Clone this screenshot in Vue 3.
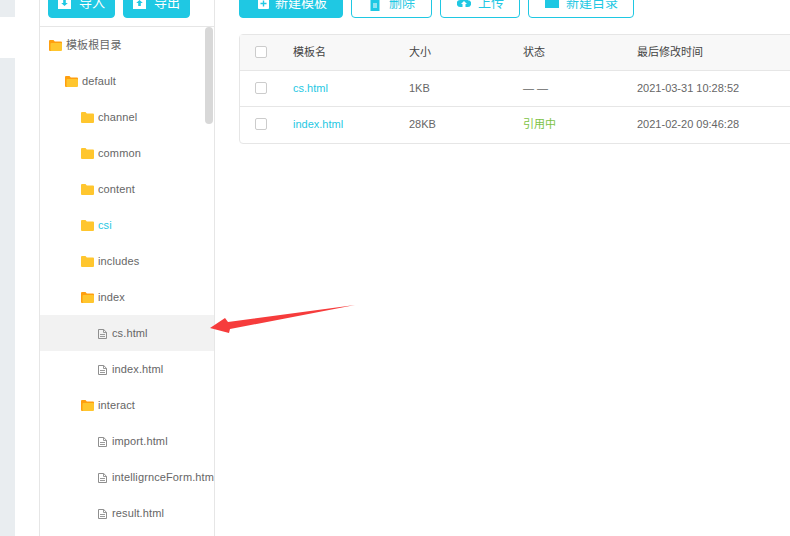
<script setup>
const tree = [
  { name: '模板根目录', level: 0, type: 'open' },
  { name: 'default', level: 1, type: 'open' },
  { name: 'channel', level: 2, type: 'closed' },
  { name: 'common', level: 2, type: 'closed' },
  { name: 'content', level: 2, type: 'closed' },
  { name: 'csi', level: 2, type: 'closed', active: true },
  { name: 'includes', level: 2, type: 'closed' },
  { name: 'index', level: 2, type: 'open' },
  { name: 'cs.html', level: 3, type: 'file', hover: true },
  { name: 'index.html', level: 3, type: 'file' },
  { name: 'interact', level: 2, type: 'open' },
  { name: 'import.html', level: 3, type: 'file' },
  { name: 'intelligrnceForm.html', level: 3, type: 'file' },
  { name: 'result.html', level: 3, type: 'file' }
]
const files = [
  { name: 'cs.html', size: '1KB', status: '— —', used: false, time: '2021-03-31 10:28:52' },
  { name: 'index.html', size: '28KB', status: '引用中', used: true, time: '2021-02-20 09:46:28' }
]
</script>

<template>
  <div class="page">
    <aside class="gutter">
      <div class="block top"></div>
      <div class="block rest"></div>
    </aside>

    <section class="panel">
      <div class="panel-tools">
        <button class="btn solid small">
          <svg class="ico" viewBox="0 0 13 13"><path fill="#fff" d="M0 1.500A1 1 0 0 1 1 .5h11a1 1 0 0 1 1 1V13H0z"/><path fill="#1fc8e3" d="M5.200 4h2.600v3h2L6.500 10 3.200 7h2z"/></svg>
          <span>导入</span>
        </button>
        <button class="btn solid small">
          <svg class="ico" viewBox="0 0 13 13"><path fill="#fff" d="M0 1.500A1 1 0 0 1 1 .5h11a1 1 0 0 1 1 1V13H0z"/><path fill="#1fc8e3" d="M5.200 10h2.600V7h2L6.500 4 3.200 7h2z"/></svg>
          <span>导出</span>
        </button>
      </div>
      <div class="tree">
        <div class="scroll-thumb"></div>
        <div
          v-for="item in tree"
          :key="item.name"
          class="node"
          :class="['lv' + item.level, { active: item.active, hover: item.hover }]"
        >
          <svg v-if="item.type === 'open'" class="folder" viewBox="0 0 13 11">
            <path fill="#ff9f0f" d="M0 1a1 1 0 0 1 1-1h3.500l1.300 1.500H12a1 1 0 0 1 1 1V4H3v7H1a1 1 0 0 1-1-1z"/>
            <path fill="#ffc62e" d="M1.500 4a1 1 0 0 1 1-1H12a1 1 0 0 1 1 1v6a1 1 0 0 1-1 1H2.500a1 1 0 0 1-1-1z"/>
          </svg>
          <svg v-else-if="item.type === 'closed'" class="folder" viewBox="0 0 13 11">
            <path fill="#ffc62e" d="M0 1a1 1 0 0 1 1-1h3.500l1.300 1.500H12a1 1 0 0 1 1 1V10a1 1 0 0 1-1 1H1a1 1 0 0 1-1-1z"/>
          </svg>
          <svg v-else class="file" viewBox="0 0 9 10">
            <path fill="none" stroke="#8f8f8f" d="M.5.500h5.200l2.800 2.800v6.200H.5z"/>
            <path fill="none" stroke="#8f8f8f" stroke-width=".9" d="M5.500.500v3h3M2 5.500h5M2 7.500h5"/>
          </svg>
          <span class="label">{{ item.name }}</span>
        </div>
      </div>
    </section>

    <main class="main">
      <div class="tools">
        <button class="btn solid wide">
          <svg class="ico" viewBox="0 0 13 13"><path fill="#fff" d="M3 0h7l3 3v9a1 1 0 0 1-1 1H3a1 1 0 0 1-1-1V1a1 1 0 0 1 1-1z"/><path fill="#1fc8e3" d="M6.800 4.500h1.400v2.300h2.300v1.400H8.200v2.300H6.800V8.200H4.500V6.800h2.300z"/></svg>
          <span>新建模板</span>
        </button>
        <button class="btn line del">
          <svg class="ico" viewBox="0 0 14 14"><path fill="#1fc8e3" d="M2 0h10v2H2zM2.500 3h9v11h-9z"/><path fill="#fff" d="M5.500 6h1v5h-1zM7.500 6h1v5h-1z"/></svg>
          <span>删除</span>
        </button>
        <button class="btn line">
          <svg class="ico" viewBox="0 0 14 14"><path fill="#1fc8e3" d="M3.500 12A3.500 3.500 0 0 1 3 5 4.200 4.200 0 0 1 11 5.200 3.400 3.400 0 0 1 10.500 12H8.500V9H10L7 6 4 9h1.500v3z"/></svg>
          <span>上传</span>
        </button>
        <button class="btn line">
          <svg class="ico" viewBox="0 0 14 14"><path fill="#1fc8e3" d="M0 1h5l1.500 1.500H14V13H0z"/></svg>
          <span>新建目录</span>
        </button>
      </div>

      <div class="table">
        <div class="row head">
          <span class="check"></span>
          <span>模板名</span>
          <span>大小</span>
          <span>状态</span>
          <span>最后修改时间</span>
        </div>
        <div v-for="file in files" :key="file.name" class="row">
          <span class="check"></span>
          <span class="link">{{ file.name }}</span>
          <span>{{ file.size }}</span>
          <span :class="{ used: file.used }">{{ file.status }}</span>
          <span>{{ file.time }}</span>
        </div>
      </div>
    </main>

    <svg class="arrow" viewBox="0 0 150 32" width="150" height="32">
      <path fill="#f63c3c" d="M146 1 19 18 16 14 1 24 20 29 21 25z"/>
    </svg>
  </div>
</template>

<style>
html, body {
  margin: 0;
  background: #fff;
}
</style>

<style scoped>
.page {
  position: relative;
  display: flex;
  width: 790px;
  height: 536px;
  overflow: hidden;
  font-family: "Liberation Sans", "Noto Sans CJK SC", sans-serif;
  font-size: 11px;
  line-height: 16px;
  color: #666;
  background: #fff;
}
.gutter {
  flex: none;
  width: 15px;
  margin-right: 24px;
  display: flex;
  flex-direction: column;
  gap: 41px;
}
.block {
  background: #e9edf0;
}
.block.top {
  height: 17px;
}
.block.rest {
  flex: 1;
}
.panel {
  flex: none;
  width: 174px;
  margin-top: -14px;
  height: 550px;
  border-left: 1px solid #e6e6e6;
  border-right: 1px solid #e6e6e6;
  display: flex;
  flex-direction: column;
}
.panel-tools {
  flex: none;
  display: flex;
  gap: 8px;
  padding: 0 8px 8px;
  border-bottom: 1px solid #e6e6e6;
}
.tree {
  position: relative;
  flex: 1;
  overflow: hidden;
}
.scroll-thumb {
  position: absolute;
  top: 0;
  right: 1px;
  width: 8px;
  height: 97px;
  border-radius: 4px;
  background: #d8d8d8;
}
.node {
  display: flex;
  align-items: center;
  height: 36px;
  white-space: nowrap;
  overflow: hidden;
}
.node.hover {
  background: #f2f2f2;
}
.node.active {
  color: #1fc8e3;
}
.lv0 { padding-left: 9px; }
.lv1 { padding-left: 25px; }
.lv2 { padding-left: 41px; }
.lv3 { padding-left: 58px; }
.label {
  letter-spacing: 0.12px;
}
.folder {
  flex: none;
  width: 13px;
  height: 11px;
  margin-right: 4px;
}
.file {
  flex: none;
  width: 9px;
  height: 10px;
  margin-right: 5px;
  margin-top: 1px;
}
.main {
  flex: none;
  width: 575px;
  margin-left: 24px;
  margin-top: -14px;
}
.tools {
  display: flex;
  gap: 8px;
}
.btn {
  display: inline-flex;
  align-items: center;
  flex: none;
  height: 32px;
  box-sizing: border-box;
  padding: 0 15px 0 16px;
  gap: 7px;
  border: 1px solid #1fc8e3;
  border-radius: 4px;
  font-family: inherit;
  font-size: 13px;
  white-space: nowrap;
  background: #fff;
  color: #1fc8e3;
}
.btn span {
  margin-bottom: 2px;
}
.btn.solid {
  background: #1fc8e3;
  color: #fff;
}
.btn.small {
  width: 67px;
  padding: 0 9px;
  gap: 8px;
}
.btn.wide {
  gap: 6px;
  width: 104px;
}
.btn.del {
  width: 81px;
}
.ico {
  flex: none;
  width: 14px;
  height: 14px;
}
.del .ico {
  margin-top: 4px;
}
.solid .ico {
  width: 13px;
  height: 13px;
}
.table {
  margin-top: 16px;
  width: 575px;
  border: 1px solid #e6e6e6;
  border-radius: 4px;
}
.row {
  display: grid;
  grid-template-columns: 53px 116px 114px 114px 1fr;
  align-items: center;
  height: 35px;
  box-sizing: content-box;
  border-bottom: 1px solid #e6e6e6;
}
.row > span {
  margin-bottom: 2px;
}
.row:last-child {
  border-bottom: 0;
  height: 36px;
}
.head {
  background: #f8f8f8;
  color: #444;
}
.check {
  display: block;
  width: 10px;
  height: 10px;
  margin-left: 15px;
  border: 1px solid #ccc;
  border-radius: 2px;
  background: #fff;
}
.link {
  color: #1fc8e3;
}
.used {
  color: #7cc243;
}
.arrow {
  position: absolute;
  left: 209px;
  top: 304px;
}
</style>
